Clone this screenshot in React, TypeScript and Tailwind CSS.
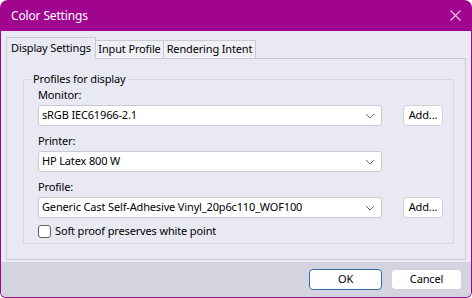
import React from 'react';

const font = { fontFamily: '"Segoe UI", "Noto Sans", sans-serif', letterSpacing: '-0.15px' };

const Chevron = () => (
  <svg width="10" height="6" viewBox="0 0 10 6" className="text-[#6b6b6b]">
    <path d="M1 1 L5 5 L9 1" fill="none" stroke="currentColor" strokeWidth="1" />
  </svg>
);

const Combo = ({ value }: { value: string }) => (
  <div className="flex h-[21px] w-[344px] shrink-0 items-center justify-between rounded-[3px] border border-[#c9cad3] bg-white pl-[3px] pr-[6px]">
    <span className="text-[11px] text-black">{value}</span>
    <Chevron />
  </div>
);

const AddButton = () => (
  <button className="flex h-[21px] w-[40px] shrink-0 items-center justify-center rounded-[4px] border border-[#d0d1d8] bg-white text-[11px] text-black">
    Add...
  </button>
);

export default function App() {
  return (
    <div className="h-[298px] w-[472px] overflow-hidden rounded-t-[8px] rounded-b-[6px] bg-[#a1048f] px-[1px] pb-[1px]" style={font}>
      {/* title bar */}
      <div className="flex h-[31px] items-center justify-between pl-[10px] pr-[10px]">
        <span className="text-[12px] text-white">Color Settings</span>
        <svg width="11" height="11" viewBox="0 0 11 11" className="text-[#f0c4ea]">
          <path d="M0.5 0.5 L10.5 10.5 M10.5 0.5 L0.5 10.5" stroke="currentColor" strokeWidth="1.2" />
        </svg>
      </div>

      <div className="flex h-[266px] flex-col rounded-b-[5px] bg-[#e8e9f3]">
        {/* tabs */}
        <div className="px-[5px] pt-[6px]">
          <div className="flex items-end">
            <div className="relative z-10 -mb-[1px] flex h-[22px] w-[90px] items-center justify-center border border-b-0 border-[#c9cad3] bg-[#e8e9f3] text-[11px] text-black">
              Display Settings
            </div>
            <div className="flex h-[18px] w-[68px] items-center justify-center border border-b-0 border-l-0 border-[#c9cad3] bg-[#eff0f5] text-[11px] text-black">
              Input Profile
            </div>
            <div className="flex h-[18px] w-[92px] items-center justify-center border border-b-0 border-l-0 border-[#c9cad3] bg-[#eff0f5] text-[11px] text-black">
              Rendering Intent
            </div>
          </div>
          {/* panel */}
          <div className="h-[202px] border border-[#c9cad3] pl-[16px] pr-[11px] pt-[20px]">
            <div className="relative h-[165px] rounded-[2px] border border-[#d6d7e0] pl-[14px] pr-[10px] pt-[7px]">
              <span className="absolute -top-[9px] left-[7px] bg-[#e8e9f3] px-[2px] text-[11px] leading-[16px] text-black">
                Profiles for display
              </span>
              <div className="flex flex-col">
                <span className="text-[11px] leading-[16px] text-black">Monitor:</span>
                <div className="mt-[2px] flex items-center gap-[21px]">
                  <Combo value="sRGB IEC61966-2.1" />
                  <AddButton />
                </div>
                <span className="mt-[7px] text-[11px] leading-[16px] text-black">Printer:</span>
                <div className="mt-[2px] flex items-center">
                  <Combo value="HP Latex 800 W" />
                </div>
                <span className="mt-[7px] text-[11px] leading-[16px] text-black">Profile:</span>
                <div className="mt-[2px] flex items-center gap-[21px]">
                  <Combo value="Generic Cast Self-Adhesive Vinyl_20p6c110_WOF100" />
                  <AddButton />
                </div>
                <div className="mt-[5px] flex items-center gap-[4px]">
                  <div className="h-[13px] w-[13px] rounded-[3px] border border-[#5f5f66] bg-white" />
                  <span className="text-[11px] leading-[16px] text-black">Soft proof preserves white point</span>
                </div>
              </div>
            </div>
          </div>
        </div>

        {/* footer */}
        <div className="mt-auto flex h-[35px] items-center justify-end gap-[9px] rounded-b-[5px] bg-[#d3d4df] pr-[9px]">
          <button className="flex h-[21px] w-[73px] items-center justify-center rounded-[4px] border border-[#2f6ca8] bg-white text-[11px] text-black">
            OK
          </button>
          <button className="flex h-[21px] w-[71px] items-center justify-center rounded-[4px] border border-[#d0d1d8] bg-white text-[11px] text-black">
            Cancel
          </button>
        </div>
      </div>
    </div>
  );
}
